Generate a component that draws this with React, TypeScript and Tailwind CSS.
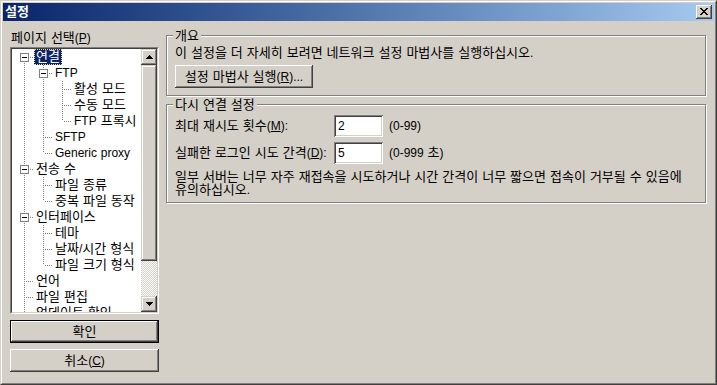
import type { ReactNode } from "react";

const raised =
  "shadow-[inset_-1px_-1px_0_#404040,inset_1px_1px_0_#ffffff,inset_-2px_-2px_0_#808080,inset_2px_2px_0_#d4d0c8]";
const scrollRaised =
  "shadow-[inset_-1px_-1px_0_#404040,inset_1px_1px_0_#d4d0c8,inset_-2px_-2px_0_#808080,inset_2px_2px_0_#ffffff]";
const sunken =
  "shadow-[inset_1px_1px_0_#808080,inset_-1px_-1px_0_#ffffff,inset_2px_2px_0_#404040,inset_-2px_-2px_0_#d4d0c8]";

// Latin runs are set a touch smaller than the Hangul so both match the dialog font widths
function L({ children }: { children: ReactNode }) {
  return <span className="text-[12px]">{children}</span>;
}

type Row = {
  label: ReactNode;
  level: number;
  guides: boolean[];
  box?: boolean;
  first?: boolean;
  last?: boolean;
  selected?: boolean;
};

const rows: Row[] = [
  { label: "연결", level: 0, guides: [], box: true, first: true, selected: true },
  { label: <L>FTP</L>, level: 1, guides: [true], box: true },
  { label: "활성 모드", level: 2, guides: [true, true] },
  { label: "수동 모드", level: 2, guides: [true, true] },
  { label: <><L>FTP</L> 프록시</>, level: 2, guides: [true, true], last: true },
  { label: <L>SFTP</L>, level: 1, guides: [true] },
  { label: <L>Generic proxy</L>, level: 1, guides: [true], last: true },
  { label: "전송 수", level: 0, guides: [], box: true },
  { label: "파일 종류", level: 1, guides: [true] },
  { label: "중복 파일 동작", level: 1, guides: [true], last: true },
  { label: "인터페이스", level: 0, guides: [], box: true },
  { label: "테마", level: 1, guides: [true] },
  { label: <>날짜<L>/</L>시간 형식</>, level: 1, guides: [true] },
  { label: "파일 크기 형식", level: 1, guides: [true], last: true },
  { label: "언어", level: 0, guides: [] },
  { label: "파일 편집", level: 0, guides: [] },
  { label: "업데이트 확인", level: 0, guides: [] },
];

function TreeLines({ row }: { row: Row }) {
  const w = 19 * (row.level + 1);
  const o = row.level * 19;
  const x = o + 9.5;
  return (
    <svg width={w} height={16} className="shrink-0" shapeRendering="crispEdges">
      <g stroke="#808080" strokeDasharray="1 1">
        {row.guides.map((g, i) =>
          g ? <line key={i} x1={i * 19 + 9.5} y1={0} x2={i * 19 + 9.5} y2={16} /> : null
        )}
        {!row.first && <line x1={x} y1={0} x2={x} y2={row.box ? 4 : 8} />}
        {!row.last && <line x1={x} y1={row.box ? 14 : 8} x2={x} y2={16} />}
        <line x1={o + (row.box ? 15 : 11)} y1={8.5} x2={w} y2={8.5} />
      </g>
      {row.box && (
        <>
          <rect x={o + 5.5} y={4.5} width={8} height={8} fill="#ffffff" stroke="#808080" />
          <rect x={o + 7} y={8} width={5} height={1} fill="#000000" />
        </>
      )}
    </svg>
  );
}

function Arrow({ down }: { down?: boolean }) {
  return (
    <svg width="7" height="4" shapeRendering="crispEdges" className={down ? "rotate-180" : ""}>
      <path d="M3 0h1v1h1v1h1v1h1v1H0V3h1V2h1V1h1z" fill="#000000" />
    </svg>
  );
}

function ScrollBtn({ down }: { down?: boolean }) {
  return (
    <div className={`h-[16px] flex items-center justify-center bg-[#d4d0c8] ${scrollRaised}`}>
      <Arrow down={down} />
    </div>
  );
}

function Group({ title, className, children }: { title: string; className: string; children: ReactNode }) {
  return (
    <div
      className={`relative border border-[#808080] shadow-[1px_1px_0_#ffffff,inset_1px_1px_0_#ffffff] ${className}`}
    >
      <span className="absolute left-[6px] top-[-8px] px-[2px] bg-[#d4d0c8] leading-[16px]">{title}</span>
      {children}
    </div>
  );
}

function Field({ value }: { value: string }) {
  return (
    <input
      readOnly
      value={value}
      className={`w-[49px] h-[22px] bg-white pl-[4px] outline-none text-[12px] leading-[16px] ${sunken}`}
    />
  );
}

export default function App() {
  return (
    <div className="w-[717px] h-[385px] bg-[#d4d0c8] text-[13px] [word-spacing:0.4px] text-black font-['Liberation_Sans','Noto_Sans_CJK_KR',sans-serif] border border-t-[#d4d0c8] border-l-[#d4d0c8] border-r-[#404040] border-b-[#404040]">
      <div className="h-full border border-t-white border-l-white border-r-[#808080] border-b-[#808080] p-[1px]">
        {/* Title bar */}
        <div className="h-[18px] flex items-center justify-between bg-linear-to-r from-[#0a246a] to-[#a6caf0] px-[2px]">
          <span className="text-white font-bold leading-[18px]">설정</span>
          <div className={`w-[16px] h-[14px] flex items-center justify-center bg-[#d4d0c8] ${raised}`}>
            <svg width="8" height="7" shapeRendering="crispEdges" className="-mt-px">
              <path
                d="M0 0h2v1h-2zM6 0h2v1h-2zM1 1h2v1h-2zM5 1h2v1h-2zM2 2h4v1h-4zM3 3h2v1h-2zM2 4h4v1h-4zM1 5h2v1h-2zM5 5h2v1h-2zM0 6h2v1h-2zM6 6h2v1h-2z"
                fill="#000000"
              />
            </svg>
          </div>
        </div>

        <div className="flex pl-[7px] gap-[7px]">
          {/* Left column */}
          <div className="w-[149px] pt-[9px]">
            <div className="h-[16px] leading-[16px] pl-px">
              페이지 선택<L>(<u>P</u>)</L>
            </div>
            <div className="mt-px h-[267px] border border-t-[#808080] border-l-[#808080] border-r-white border-b-white">
              <div className="h-full flex bg-white border border-t-[#404040] border-l-[#404040] border-r-[#d4d0c8] border-b-[#d4d0c8]">
                <div className="flex-1 overflow-hidden pl-[3px]">
                  {rows.map((r, i) => (
                    <div key={i} className="h-[16px] flex items-center whitespace-nowrap">
                      <TreeLines row={r} />
                      <span
                        className={
                          r.selected
                            ? "h-[16px] px-px leading-[14px] border border-dotted border-[#e8d890] bg-[#0a246a] text-white"
                            : "h-[16px] px-px leading-[14px] border border-transparent"
                        }
                      >
                        {r.label}
                      </span>
                    </div>
                  ))}
                </div>
                <div className="w-[16px] shrink-0 flex flex-col">
                  <ScrollBtn />
                  <div className={`h-[196px] bg-[#d4d0c8] ${scrollRaised}`} />
                  <div className="flex-1 bg-[repeating-conic-gradient(#d4d0c8_0_25%,#ffffff_0_50%)] bg-[length:2px_2px]" />
                  <ScrollBtn down />
                </div>
              </div>
            </div>
            <div className="mt-[6px] h-[23px] border border-black">
              <div className={`h-full flex items-center justify-center bg-[#d4d0c8] ${raised}`}>확인</div>
            </div>
            <div className={`mt-[6px] h-[23px] flex items-center justify-center ${raised}`}>
              취소<L>(<u>C</u>)</L>
            </div>
          </div>

          {/* Right column */}
          <div className="w-[540px] pt-[14px]">
            <Group title="개요" className="h-[61px] pl-[8px] pt-[9px]">
              <div className="leading-[16px]">
                이 설정을 더 자세히 보려면 네트워크 설정 마법사를 실행하십시오<L>.</L>
              </div>
              <div className={`mt-[4px] w-[138px] h-[23px] flex items-center justify-center ${raised}`}>
                설정 마법사 실행<L>(<u>R</u>)...</L>
              </div>
            </Group>

            <Group title="다시 연결 설정" className="mt-[8px] h-[99px] pl-[8px] pt-[10px]">
              <div className="flex items-center h-[22px]">
                <span className="w-[159px] whitespace-nowrap">
                  최대 재시도 횟수<L>(<u>M</u>):</L>
                </span>
                <Field value="2" />
                <span className="ml-[6px]">
                  <L>(0-99)</L>
                </span>
              </div>
              <div className="mt-[5px] flex items-center h-[22px]">
                <span className="w-[159px] whitespace-nowrap">
                  실패한 로그인 시도 간격<L>(<u>D</u>):</L>
                </span>
                <Field value="5" />
                <span className="ml-[6px]">
                  <L>(0-999 </L>초<L>)</L>
                </span>
              </div>
              <p className="mt-[6px] leading-[13px]">
                일부 서버는 너무 자주 재접속을 시도하거나 시간 간격이 너무 짧으면 접속이 거부될 수 있음에
                <br />
                유의하십시오<L>.</L>
              </p>
            </Group>
          </div>
        </div>
      </div>
    </div>
  );
}
